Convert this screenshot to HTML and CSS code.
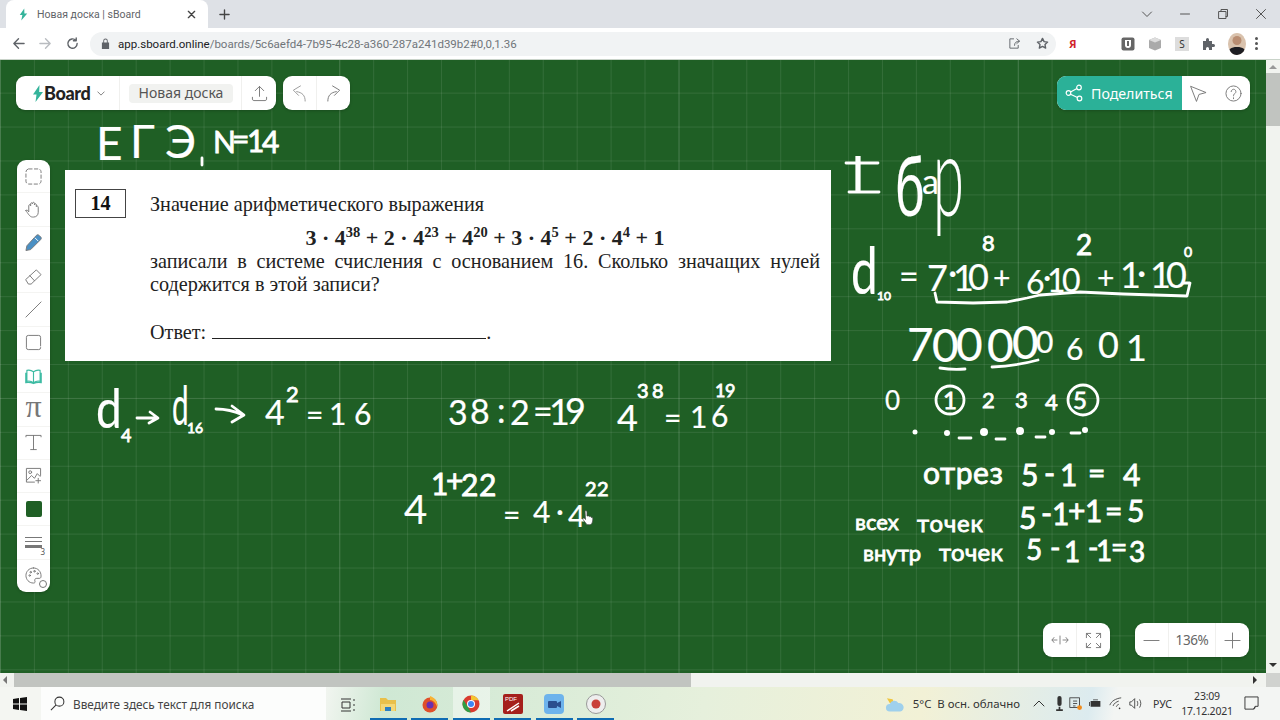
FILE: index.html
```html
<!DOCTYPE html>
<html lang="ru">
<head>
<meta charset="utf-8">
<title>Новая доска | sBoard</title>
<link rel="stylesheet" href="styles.css">
</head>
<body>
<header class="tabbar">
  <div class="tab">
    <svg class="favicon" viewBox="0 0 12 16"><path d="M7 0 1 8.500h3.500L3 16l8-9.500H7.200z"/></svg>
    <span class="tab-title">Новая доска | sBoard</span>
    <svg class="tab-x ic" viewBox="0 0 10 10"><path d="M1.500 1.500l7 7M8.500 1.500l-7 7"/></svg>
  </div>
  <svg class="tab-plus ic" viewBox="0 0 12 12"><path d="M6 1v10M1 6h10"/></svg>
  <div class="win-controls">
    <svg class="wc ic-thin" viewBox="0 0 12 12"><path d="M1.500 4 6 8.500 10.500 4"/></svg>
    <svg class="wc ic-thin" viewBox="0 0 12 12"><path d="M1.500 6h9"/></svg>
    <svg class="wc ic-thin" viewBox="0 0 12 12"><path d="M2 3.500h7v7H2zM4 3.500V1.500h6.500v7H9"/></svg>
    <svg class="wc ic-thin" viewBox="0 0 12 12"><path d="M1.500 1.500l9 9M10.500 1.500l-9 9"/></svg>
  </div>
</header>
<nav class="toolbar">
  <svg class="nav-ic ic" viewBox="0 0 14 14"><path d="M13 7H2M7 2 2 7l5 5"/></svg>
  <svg class="nav-ic ic dim" viewBox="0 0 14 14"><path d="M1 7h11M7 2l5 5-5 5"/></svg>
  <svg class="nav-ic ic" viewBox="0 0 14 14"><path d="M12 7a5 5 0 1 1-1.500-3.500M11 1v3H8"/></svg>
  <div class="omnibox">
    <svg class="lock" viewBox="0 0 10 12"><path d="M1 5h8v7H1zM2.500 5V3a2.500 2.500 0 0 1 5 0v2H6.500V3a1.500 1.500 0 0 0-3 0v2z"/></svg>
    <span class="url"><b>app.sboard.online</b>/boards/5c6aefd4-7b95-4c28-a360-287a241d39b2#0,0,1.36</span>
    <svg class="omni-ic share ic-thin" viewBox="0 0 14 14"><path d="M6 2H2v10h9V9M7 9c0-3 2-4.500 5-4.500M9.500 2 12.500 4.500 9.500 7"/></svg>
    <svg class="omni-ic ic" viewBox="0 0 14 14"><path d="M7 1.500l1.700 3.500 3.800.5-2.800 2.600.7 3.900L7 10.100 3.600 12l.7-3.900L1.500 5.500 5.300 5z"/></svg>
  </div>
  <div class="ext-row">
    <span class="ya">Я</span>
    <svg class="ext ext-far" viewBox="0 0 14 14"><rect class="e-dark" x="0.500" y="0.500" width="13" height="13" rx="2"/><path class="e-white" d="M4 3h6v5a3 3 0 0 1-6 0z"/><path class="e-dark" d="M6 4h2v5H6z"/></svg>
    <svg class="ext" viewBox="0 0 14 14"><path class="e-mid" d="M7 .5 13 3v8l-6 2.500L1 11V3z"/><path class="e-light" d="M7 .5 13 3 7 5.500 1 3z"/></svg>
    <span class="ext-s">S</span>
    <svg class="ext" viewBox="0 0 14 14"><path class="e-puzzle" d="M1 4h3V2.500a1.500 1.500 0 0 1 3 0V4h3v3h1.500a1.500 1.500 0 0 1 0 3H10v3H7v-1.500a1.500 1.500 0 0 0-3 0V13H1z"/></svg>
    <svg class="avatar" viewBox="0 0 18 22"><rect class="av-bg" width="18" height="22"/><circle class="av-face" cx="9" cy="7.500" r="4.500"/><path class="av-body" d="M0 22c0-6 3-8 9-8s9 2 9 8z"/></svg>
    <span class="dots"><i></i><i></i><i></i></span>
  </div>
</nav>

<main class="viewport">
  <div class="board-row">
    <section class="board">
      <svg class="ink" viewBox="0 60 1266 613">
        <text class="t f46" x="96 130 165" y="160 158 158">ЕГЭ</text>
        <path class="s" d="M202 158v7"/>
        <text class="t f30 b" x="213 232 247 262" y="153 150 152 153">N=14</text>

        <text class="t f50" x="851" y="192">I</text>
        <path class="s" d="M846 163h32M849 192h30"/>
        <text class="t f84" transform="translate(895 216) scale(.6 1)">б</text>
        <text class="t f34" x="922" y="194">а</text>
        <text class="t f112" transform="translate(933 216) scale(.5 1)">р</text>

        <text class="t f66" transform="translate(851 294) scale(.72 1)">d</text>
        <text class="t f12 b" x="877" y="300">10</text>
        <text class="t f34" x="899" y="289">=</text>
        <text class="t f36" x="927 948 953 968" y="291 285 291 290">7·10</text>
        <text class="t f22 b" x="982" y="251">8</text>
        <text class="t f30" x="993" y="289">+</text>
        <text class="t f32" x="1026 1043 1047 1062" y="294 288 292 292">6·10</text>
        <text class="t f28 b" x="1076" y="255">2</text>
        <text class="t f30" x="1097" y="289">+</text>
        <text class="t f36" x="1120 1137 1150 1166" y="288 285 288 288">1·10</text>
        <text class="t f14 b" x="1184" y="257">0</text>
        <path class="s" d="M935 293l2 9 36 1 34-1 20-4 13-3 40-3 43 2 64 2 3-13h-7"/>

        <text class="t f46" x="907 932 956 987 1012" y="361 362 361 362 359">70000</text>
        <text class="t f30" x="1036 1066" y="353 360">06</text>
        <text class="t f36" x="1098 1126" y="358 361">01</text>
        <path class="s" d="M940 368q12 2 25 1M992 367q24-1 46-7"/>

        <text class="t f26" x="885" y="410">0</text>
        <circle class="s" cx="950" cy="400" r="14"/>
        <text class="t f24 b" x="943" y="409">1</text>
        <text class="t f22 b" x="982 1015 1045" y="408 408 410">234</text>
        <circle class="s" cx="1083" cy="400" r="15"/>
        <text class="t f24 b" x="1073" y="409">5</text>
        <circle class="dot" cx="915" cy="432" r="2.500"/>
        <circle class="dot" cx="947" cy="433" r="3"/>
        <circle class="dot" cx="984" cy="432" r="4"/>
        <circle class="dot" cx="1020" cy="431" r="4"/>
        <circle class="dot" cx="1052" cy="432" r="3"/>
        <circle class="dot" cx="1085" cy="430" r="3"/>
        <path class="s" d="M959 438h12M996 439h9M1036 437h9M1071 433h9"/>

        <text class="t f30 b" x="923" y="484" textLength="80" lengthAdjust="spacing">отрез</text>
        <text class="t f30 b" x="1021 1044 1060 1088 1123" y="486 484 486 484 486">5-1=4</text>

        <text class="t f22 b" x="855" y="530">всех</text>
        <text class="t f24 b" x="917" y="532" textLength="66" lengthAdjust="spacing">точек</text>
        <text class="t f30 b" x="1019 1041 1052 1068 1085 1105 1127" y="529 524 525 522 522 522 522">5-1+1=5</text>

        <text class="t f22 b" x="863" y="561">внутр</text>
        <text class="t f24 b" x="939" y="561" textLength="64" lengthAdjust="spacing">точек</text>
        <text class="t f28 b" x="1026 1050 1064 1088 1096 1111 1129" y="560 558 562 558 561 557 562">5-1-1=3</text>

        <text class="t f54" transform="translate(96 428) scale(.85 1)">d</text>
        <text class="t f18 b" x="121" y="442">4</text>
        <path class="s" d="M137 418h20M150 412l8 6-9 5"/>
        <text class="t f54" transform="translate(172 425) scale(.55 1)">d</text>
        <text class="t f14 b" x="187" y="433">16</text>
        <path class="s" d="M216 409q14 0 27 6M232 406l12 9-12 7"/>
        <text class="t f34" x="265" y="425">4</text>
        <text class="t f22 b" x="286" y="402">2</text>
        <text class="t f30" x="306 329 354" y="426 425 425">=16</text>

        <text class="t f34" x="448 470 497 510 533" y="425 424 423 425 424">38:2=</text>
        <text class="t f36" x="549 565" y="425 424">19</text>
        <text class="t f36" x="617" y="431">4</text>
        <text class="t f20 b" x="637 652" y="398 398">38</text>
        <text class="t f30" x="664 690 711" y="429 428 427">=16</text>
        <text class="t f18 b" x="715 725" y="397 397">19</text>

        <text class="t f40" x="404" y="524">4</text>
        <text class="t f30 b" x="431 446 461 479" y="495 492 496 496">1+22</text>
        <text class="t f30" x="503 533 556 568" y="526 523 522 527">=4·4</text>
        <text class="t f20 b" x="585 597" y="496 496">22</text>
      </svg>

      <svg class="hand-cursor" viewBox="0 0 12 16"><path d="M3 1.500c1-.8 2 0 2 1v4l1 0c1-.3 1.500 0 1.700.7 1-.4 1.500 0 1.700.8 1-.2 1.400.4 1.400 1.200 0 3-1 6-3 6H5L1 10c-.6-1 .4-2 1.500-1.200L3.500 10z"/></svg>

      <article class="task">
        <div class="task-num">14</div>
        <div class="task-body">
          <p class="task-line">Значение арифметического выражения</p>
          <p class="formula">3 · 4<sup>38</sup> + 2 · 4<sup>23</sup> + 4<sup>20</sup> + 3 · 4<sup>5</sup> + 2 · 4<sup>4</sup> + 1</p>
          <p class="task-just">записали в системе счисления с основанием 16. Сколько значащих нулей содержится в этой записи?</p>
          <p class="task-answer">Ответ: <span class="blank"></span>.</p>
        </div>
      </article>

      <div class="panel top-left">
        <div class="logo-cell">
          <svg class="logo-bolt" viewBox="0 0 10 17"><path d="M6.500 0 0 9.500h3.500L2.500 17 10 7H6.200z"/></svg>
          <span class="logo-text">Board</span>
          <svg class="chev ic-thin" viewBox="0 0 10 6"><path d="M1 1l4 4 4-4"/></svg>
        </div>
        <div class="name-cell"><span class="board-name">Новая доска</span></div>
        <div class="icon-cell wide">
          <svg class="ic-lg ic-thin" viewBox="0 0 18 18"><path d="M9 12V1.500M4.500 6 9 1.500 13.500 6M1.500 13v2c0 .8.700 1.500 1.500 1.500h12c.8 0 1.500-.7 1.500-1.500v-2"/></svg>
        </div>
      </div>
      <div class="panel undo">
        <div class="icon-cell"><svg class="ic-lg ic-thin dim2" viewBox="0 0 18 18"><path d="M15 17c0-6-3-9-9-10M10 1 2.500 5.500 8 11"/></svg></div>
        <div class="icon-cell"><svg class="ic-lg ic-thin" viewBox="0 0 18 18"><path d="M3 17c0-6 3-9 9-10M8 1l7.500 4.500L10 11"/></svg></div>
      </div>
      <div class="panel top-right">
        <button class="share-btn">
          <svg class="share-ic" viewBox="0 0 18 18"><circle cx="3.500" cy="9" r="2.300"/><circle cx="14" cy="3.500" r="2.300"/><circle cx="14.500" cy="14.500" r="2.300"/><path d="M5.500 8 12 4.500M5.500 10.200l7 3.300"/></svg>
          Поделиться
        </button>
        <div class="share-tools">
          <svg class="ic-lg ic-thin" viewBox="0 0 18 18"><path d="M1 1.500 17 8 9.500 10 7 17z"/></svg>
          <svg class="ic-lg ic-thin" viewBox="0 0 18 18"><circle cx="9" cy="9" r="8"/><path d="M6.500 7a2.500 2.500 0 1 1 4 2c-1 .7-1.500 1.200-1.500 2.500M9 13.500v1"/></svg>
        </div>
      </div>

      <aside class="panel tools">
        <div class="tool"><svg class="ic-lg ic-thin dash" viewBox="0 0 18 18"><rect x="1" y="1" width="16" height="16" rx="3"/></svg></div>
        <div class="tool"><svg class="ic-lg ic-thin" viewBox="0 0 18 18"><path d="M1 10c1-1 2 0 3 1.500V5c0-1.500 2-1.500 2 0V3c0-1.500 2-1.500 2 0v-.5c0-1.500 2-1.500 2 0V4c0-1.500 2-1.500 2 0v2c0-1 2-1 2 .5V12c0 3-2 5-5 5H8c-3 0-5-4-7-7z"/></svg></div>
        <div class="tool"><svg class="ic-lg pen" viewBox="0 0 18 18"><path d="M12 1.500c1-1 2-.8 3 0l1.500 1.500c1 1 1 2 0 3L6 16.500l-5 1 1-5z"/><path class="pen-cut" d="M10.500 4l3.500 3.500"/></svg></div>
        <div class="tool"><svg class="ic-lg ic-thin" viewBox="0 0 18 18"><path d="M1 12 12 2l5 5L6.500 17H4zM5 8l5 5.500"/></svg></div>
        <div class="tool"><svg class="ic-lg ic-thin" viewBox="0 0 18 18"><path d="M1 17 17 1"/></svg></div>
        <div class="tool"><svg class="ic-lg ic-thin" viewBox="0 0 18 18"><path d="M16.500 14v.5a2 2 0 0 1-2 2h-11a2 2 0 0 1-2-2v-11a2 2 0 0 1 2-2h11a2 2 0 0 1 2 2v9"/></svg></div>
        <div class="tool"><svg class="ic-lg book" viewBox="0 0 18 18"><path d="M9 4C7 2.500 4 2 2 2.500V14c2-.5 5 0 7 1.500 2-1.500 5-2 7-1.500V2.500C14 2 11 2.500 9 4zM9 4v11.500M.8 5v10.500c3-.5 6 0 8.200 1 2.200-1 5.200-1.500 8.200-1V5"/></svg></div>
        <div class="tool"><span class="pi">π</span></div>
        <div class="tool"><svg class="ic-lg ic-thin" viewBox="0 0 18 18"><path d="M1 3V1.500h16V3M9 1.500v15M6 16.500h6"/></svg></div>
        <div class="tool"><svg class="ic-lg ic-thin" viewBox="0 0 18 18"><path d="M10 16H1.500V1.500h15V9"/><circle cx="5.500" cy="5.500" r="1.500"/><path d="M2 14l5-5 3 3 3-5 3 3M14 12v5M11.500 14.500h5"/></svg></div>
        <div class="tool"><span class="swatch"></span></div>
        <div class="tool"><span class="lines"><i></i><i></i><i></i></span><span class="lines-n">3</span></div>
        <div class="tool"><svg class="ic-lg ic-thin" viewBox="0 0 18 18"><path d="M9 1C4 1 1 5 1 9s3 8 8 8c1.500 0 2-1 1.500-2-.6-1.500 0-3 2-3h3c1 0 1.500-1 1.500-2.500C17 5 14 1 9 1z"/><circle cx="5" cy="9" r=".8"/><circle cx="6" cy="5.500" r=".8"/><circle cx="10" cy="4.500" r=".8"/><circle cx="13.500" cy="7" r=".8"/></svg><span class="palette-dot"></span></div>
      </aside>

      <div class="panel view-ctl">
        <div class="icon-cell"><svg class="ic-md ic-thin" viewBox="0 0 18 10"><path d="M6 5H1M3 2.500 1 5l2 2.500M12 5h5M15 2.500 17 5l-2 2.500M9 1v8"/></svg></div>
        <div class="icon-cell"><svg class="ic-lg ic-thin" viewBox="0 0 18 18"><path d="M6 6 1.500 1.500M1.500 6V1.500H6M12 6l4.500-4.500M12 1.500h4.500V6M6 12l-4.500 4.500M1.500 12v4.500H6M12 12l4.500 4.500M16.500 12v4.500H12"/></svg></div>
      </div>
      <div class="panel zoom-ctl">
        <div class="icon-cell"><svg class="ic-lg ic-thin" viewBox="0 0 18 18"><path d="M1 9h16"/></svg></div>
        <div class="zoom-val">136%</div>
        <div class="icon-cell"><svg class="ic-lg ic-thin" viewBox="0 0 18 18"><path d="M1 9h16M9 1v16"/></svg></div>
      </div>
    </section>
    <div class="vscroll">
      <span class="arrow-up"></span>
      <span class="vthumb"></span>
      <span class="arrow-down"></span>
    </div>
  </div>
  <div class="hscroll">
    <span class="arrow-left"></span>
    <span class="hthumb"></span>
    <span class="arrow-right"></span>
    <span class="corner"></span>
  </div>
</main>

<footer class="taskbar">
  <svg class="start" viewBox="0 0 14 14"><path d="M0 2 6 1v5.500H0zM7 .9 14 0v6.500H7zM0 7.500h6V13l-6-1zM7 7.500h7V14l-7-1z"/></svg>
  <div class="search">
    <svg class="search-ic" viewBox="0 0 16 16"><circle cx="10" cy="6" r="4.800"/><path d="M6.500 9.500 1 15"/></svg>
    <span>Введите здесь текст для поиска</span>
  </div>
  <div class="task-icons">
    <div class="ti plain"><svg class="ti-svg" viewBox="0 0 18 18"><path class="tv" d="M3 3h10M3 15h10M4 6h8v6H4zM16 3v2M16 8v2M16 13v2"/></svg></div>
    <div class="ti"><svg class="ti-svg" viewBox="0 0 18 18"><path class="f1" d="M1 3h6l2 2h8v11H1z"/><path class="f2" d="M2 9h14v7H2z"/><path class="f3" d="M6 12h6v4H6z"/></svg></div>
    <div class="ti"><svg class="ti-svg" viewBox="0 0 18 18"><circle class="ff1" cx="9" cy="10" r="7.500"/><path class="ff2" d="M9 1c5 2 8 5 7 11C15 8 12 5 9 5z"/><circle class="ff3" cx="9" cy="10" r="3.500"/></svg></div>
    <div class="ti active"><svg class="ti-svg" viewBox="0 0 18 18"><circle class="cr" cx="9" cy="9" r="8.500"/><path class="cy" d="M9 .5a8.500 8.500 0 0 1 7.600 4.700H9z"/><path class="cg" d="M1.500 5 6 12l3 5.500A8.500 8.500 0 0 1 1.500 5z"/><circle class="cw" cx="9" cy="9" r="4"/><circle class="cb" cx="9" cy="9" r="3"/></svg></div>
    <div class="ti"><svg class="ti-svg big" viewBox="0 0 20 20"><rect class="pdf" width="20" height="20" rx="2"/><path class="pdfw" d="M4 17 16 9M8 17l8-5"/><text class="pdft" x="2" y="7">PDF</text></svg></div>
    <div class="ti"><svg class="ti-svg big" viewBox="0 0 20 20"><rect class="zm" width="20" height="20" rx="4"/><rect class="zm2" x="4" y="7" width="9" height="7" rx="1"/><path class="zm3" d="M13 9l4-2v7l-4-2z"/></svg></div>
    <div class="ti"><svg class="ti-svg big" viewBox="0 0 20 20"><circle class="rec1" cx="10" cy="10" r="9.500"/><circle class="rec2" cx="10" cy="10" r="4.500"/></svg></div>
  </div>
  <div class="tray">
    <svg class="cloud" viewBox="0 0 20 20"><path class="sun" d="M2 4l6 1 2 5-5-1z"/><path class="cl" d="M5 18a4 4 0 0 1 0-8 5 5 0 0 1 9-1 4.500 4.500 0 0 1 2 9z"/></svg>
    <span class="weather">5°C&nbsp; В осн. облачно</span>
    <svg class="tr ic-thin up" viewBox="0 0 12 12"><path d="M1 8.500 6 3.500l5 5"/></svg>
    <svg class="tr mic" viewBox="0 0 12 18"><rect class="d" x="3.500" y="0" width="5" height="12" rx="2.500"/><path class="d" d="M5 13h2v3h3v2H2v-2h3z"/></svg>
    <svg class="tr" viewBox="0 0 16 16"><rect class="tr-o" x="1" y="1" width="12" height="12"/><path class="tr-o" d="M5 5h5M5 8h5M5 11h3"/><circle class="tr-a" cx="13" cy="13" r="3"/></svg>
    <svg class="tr" viewBox="0 0 16 12"><path class="d" d="M2 3h12v7H2zM0 4h1v5H0zM5 1h6v1H5z"/></svg>
    <svg class="tr" viewBox="0 0 16 16"><path class="tr-o" d="M1 10C3 5 8 2 15 1M5 11c1-3 4-5 7-6M9 12c.5-1.500 1-2 3-3"/><circle class="d" cx="13" cy="14" r="1"/></svg>
    <svg class="tr" viewBox="0 0 16 16"><path class="tr-o" d="M1 6h2l4-4v12l-4-4H1zM10 5c1 2 1 4 0 6M13 3c2 3 2 7 0 10"/></svg>
    <span class="lang">РУС</span>
    <div class="clock"><span>23:09</span><span>17.12.2021</span></div>
    <svg class="notif" viewBox="0 0 16 16"><path class="tr-o" d="M1 1h14v10h-3l-2 3H1zM10 14c1 0 1.500 0 2-3"/></svg>
  </div>
</footer>
</body>
</html>
```
FILE: styles.css
```css
* { box-sizing: border-box; }
html, body { margin: 0; padding: 0; }
body {
  width: 1280px; height: 720px; overflow: hidden;
  display: flex; flex-direction: column;
  font-family: "Noto Sans", "Liberation Sans", sans-serif;
  background: #fff; color: #333;
}
.ic, .ic-thin { fill: none; stroke: #5f6368; stroke-width: 1.500; stroke-linecap: round; stroke-linejoin: round; }
.ic-thin { stroke-width: 1; }
.dim { stroke: #b9bcc0; }
.dim2 { opacity: .75; }

/* tab strip */
.tabbar { height: 28px; background: #dee1e6; display: flex; align-items: flex-end; padding-left: 6px; flex: none; }
.tab { width: 202px; height: 28px; background: #fff; border-radius: 8px 8px 0 0; display: flex; align-items: center; padding-left: 13px; }
.favicon { width: 9px; height: 13px; fill: #35b49b; }
.tab-title { font: 10.500px "Roboto", sans-serif; color: #5f6368; margin-left: 9px; width: 150px; white-space: nowrap; }
.tab-x { width: 9px; height: 9px; stroke: #444; }
.tab-plus { width: 11px; height: 11px; margin: 0 0 8px 11px; stroke: #444; }
.win-controls { margin-left: auto; height: 28px; display: flex; align-items: center; gap: 26px; padding-right: 13px; }
.wc { width: 12px; height: 12px; stroke: #555; }

/* address bar */
.toolbar { height: 32px; background: #fff; display: flex; align-items: center; flex: none; padding-left: 12px; border-bottom: 1px solid #c9d3c9; }
.nav-ic { width: 13px; height: 13px; margin-right: 14px; }
.omnibox { width: 966px; height: 24px; border-radius: 12px; background: #f1f3f4; margin-left: -3px; display: flex; align-items: center; padding: 0 7px 0 11px; }
.lock { width: 9px; height: 11px; fill: #5f6368; }
.url { font: 11.500px "Roboto", sans-serif; color: #70757a; margin-left: 8px; white-space: nowrap; }
.url b { font-weight: 400; color: #202124; }
.omni-ic { width: 13px; height: 13px; margin-left: 15px; }
.share { margin-left: auto; }
.ext-row { display: flex; align-items: center; flex: 1; padding-left: 13px; }
.ya { color: #d0242c; font-size: 11px; font-weight: 700; width: 12px; }
.ext { width: 14px; height: 14px; margin-right: 13px; }
.ext-far { margin-left: 40px; }
.e-dark { fill: #666; } .e-white { fill: #fff; }
.e-mid { fill: #aaa; } .e-light { fill: #ddd; }
.e-puzzle { fill: #5f6368; }
.ext-s { width: 14px; height: 14px; background: #ddd; color: #333; font-size: 10px; text-align: center; line-height: 14px; margin-right: 13px; }
.avatar { width: 18px; height: 22px; border-radius: 50%; margin-left: -1px; margin-right: 9px; }
.av-bg { fill: #d9c2ad; } .av-face { fill: #b98d72; } .av-body { fill: #1d1d22; }
.dots { display: flex; flex-direction: column; gap: 2px; }
.dots i { width: 3px; height: 3px; border-radius: 50%; background: #555; }

/* board */
.viewport { flex: 1; display: flex; flex-direction: column; min-height: 0; }
.board-row { flex: 1; display: flex; min-height: 0; }
.board {
  flex: 1; position: relative; overflow: hidden;
  background-color: #1f5f25;
  background-image:
    linear-gradient(to right, rgba(255,255,255,.1) 1px, transparent 1px),
    linear-gradient(to bottom, rgba(255,255,255,.06) 1px, transparent 1px),
    linear-gradient(to right, rgba(255,255,255,.09) 1px, transparent 1px),
    linear-gradient(to bottom, rgba(255,255,255,.09) 1px, transparent 1px);
  background-size: 339.300px 339.300px, 339.300px 339.300px, 33.930px 33.930px, 33.930px 33.930px;
  background-position: 0 0, 0 -1.300px, 0 0, 0 -1.300px;
}
.ink { position: absolute; left: 0; top: 0; width: 1266px; height: 613px; }
.t { fill: #fff; font-family: "Lato", "Noto Sans", sans-serif; font-weight: 400; stroke: #fff; stroke-width: .2px; }
.t.b { stroke-width: .8px; }
.f12 { font-size: 12px; } .f14 { font-size: 14px; } .f18 { font-size: 18px; } .f20 { font-size: 20px; }
.f22 { font-size: 22px; } .f24 { font-size: 24px; } .f26 { font-size: 26px; } .f28 { font-size: 28px; }
.f30 { font-size: 30px; } .f32 { font-size: 32px; } .f34 { font-size: 34px; } .f36 { font-size: 36px; }
.f38 { font-size: 38px; } .f40 { font-size: 40px; } .f44 { font-size: 44px; } .f46 { font-size: 46px; }
.f48 { font-size: 48px; } .f50 { font-size: 50px; } .f54 { font-size: 54px; } .f66 { font-size: 66px; }
.f84 { font-size: 84px; } .f112 { font-size: 112px; font-weight: 300; }
.s { fill: none; stroke: #fff; stroke-width: 2.800; stroke-linecap: round; stroke-linejoin: round; }
.dot { fill: #fff; }
.hand-cursor { position: absolute; left: 582px; top: 449px; width: 12px; height: 17px; fill: #fff; stroke: #444; stroke-width: .7; }

/* pasted task */
.task {
  position: absolute; left: 65px; top: 110px; width: 766px; height: 191px;
  background: #fff; display: flex; gap: 24px; padding: 19px 11px 0 10px;
  font-family: "Liberation Serif", serif; font-size: 20.200px; color: #222;
}
.task-num { width: 51px; height: 29px; border: 1.500px solid #444; font-weight: 700; text-align: center; line-height: 27px; flex: none; color: #111; }
.task-body { flex: 1; }
.task p { margin: 0; }
.task-line { line-height: 23px; margin-top: 4px !important; }
.formula { text-align: center; font-weight: 700; font-size: 22px; line-height: 23px; height: 24px; margin-top: 10px !important; white-space: nowrap; }
.formula sup { font-size: 14.500px; line-height: 0; }
.task-just { text-align: justify; line-height: 23px; }
.task-answer { line-height: 23px; margin-top: 25px !important; }
.blank { display: inline-block; width: 274px; border-bottom: 1.500px solid #222; height: 14px; margin-left: 1px; vertical-align: baseline; }

/* floating panels */
.panel { position: absolute; background: #fff; border-radius: 9px; display: flex; box-shadow: 0 1px 3px rgba(0,0,0,.2); }
.top-left { left: 16px; top: 16px; width: 260px; height: 34px; align-items: stretch; }
.logo-cell { width: 104px; display: flex; align-items: center; padding-left: 17px; border-right: 1px solid #f0f0ee; }
.logo-bolt { width: 10px; height: 17px; fill: #35b49b; flex: none; }
.logo-text { font: 900 18px "Lato", sans-serif; color: #222; margin-left: 1px; letter-spacing: -.4px; }
.chev { width: 8px; height: 5px; margin-left: 7px; stroke: #666; }
.name-cell { width: 122px; display: flex; align-items: center; padding-left: 9px; border-right: 1px solid #f0f0ee; }
.board-name { background: #f1f2f0; border-radius: 4px; font-size: 14px; color: #555; width: 104px; height: 19px; line-height: 17px; text-align: center; white-space: nowrap; }
.icon-cell { flex: 1; display: flex; align-items: center; justify-content: center; }
.icon-cell + .icon-cell { border-left: 1px solid #f0f0ee; }
.ic-lg { width: 17px; height: 17px; stroke: #777; }
.ic-md { width: 18px; height: 10px; stroke: #888; }
.undo { left: 283px; top: 16px; width: 67px; height: 34px; }
.top-right { left: 1057px; top: 16px; width: 193px; height: 34px; overflow: hidden; }
.share-btn { width: 125px; border: 0; padding: 0 0 0 8px; background: #2bb198; color: #fff; font: 14.200px "Noto Sans", sans-serif; display: flex; align-items: center; gap: 8px; white-space: nowrap; }
.share-ic { width: 18px; height: 18px; fill: none; stroke: #fff; stroke-width: 1.200; }
.share-tools { flex: 1; display: flex; align-items: center; justify-content: space-between; padding: 0 8px; }
.tools { left: 17px; top: 100px; width: 33px; height: 432px; flex-direction: column; }
.tool { flex: 1; display: flex; align-items: center; justify-content: center; position: relative; border-bottom: 1px solid #f4f4f2; }
.tool:last-child { border-bottom: 0; }
.dash { stroke-dasharray: 3.500 2.500; }
.pen { width: 17px; height: 17px; fill: #4a90c4; }
.pen-cut { stroke: #fff; stroke-width: 1; fill: none; }
.book { width: 17px; height: 17px; fill: none; stroke: #3dbba3; stroke-width: 1.200; }
.pi { font: 32px "Liberation Serif", serif; color: #777; line-height: 1; margin-top: -6px; }
.swatch { width: 16px; height: 16px; border-radius: 2px; background: #1f5f25; }
.lines { display: flex; flex-direction: column; gap: 3px; width: 17px; }
.lines i { display: block; height: 1px; background: #777; }
.lines i:nth-child(2) { height: 1.500px; }
.lines i:nth-child(3) { height: 3px; }
.lines-n { position: absolute; right: 5px; bottom: 3px; font-size: 8px; color: #555; line-height: 1; }
.palette-dot { position: absolute; right: 3px; bottom: 4px; width: 8px; height: 8px; border-radius: 50%; background: #fff; border: 1px solid #777; }
.view-ctl { left: 1043px; top: 563px; width: 67px; height: 34px; }
.zoom-ctl { left: 1135px; top: 563px; width: 114px; height: 34px; }
.zoom-ctl .icon-cell { flex: none; width: 33px; }
.zoom-val { width: 48px; text-align: center; line-height: 34px; font-size: 13.500px; color: #666; border-left: 1px solid #f0f0ee; border-right: 1px solid #f0f0ee; letter-spacing: -.4px; }

/* scrollbars */
.vscroll { width: 14px; background: #f1f3ef; position: relative; flex: none; display: flex; flex-direction: column; align-items: center; }
.vthumb { width: 14px; height: 53px; background: #c1c4c0; margin-top: 13px; }
.arrow-up, .arrow-down { width: 0; height: 0; border-left: 4px solid transparent; border-right: 4px solid transparent; }
.arrow-up { border-bottom: 4px solid #999; margin-top: 5px; margin-bottom: -9px; }
.arrow-down { border-top: 4px solid #333; margin-top: auto; margin-bottom: 6px; }
.hscroll { height: 14px; background: #f1f3ef; display: flex; align-items: center; flex: none; }
.hthumb { width: 677px; height: 14px; background: #c1c4c0; margin-left: 7px; }
.arrow-left, .arrow-right { width: 0; height: 0; border-top: 4px solid transparent; border-bottom: 4px solid transparent; }
.arrow-left { border-right: 4px solid #777; margin-left: 3px; }
.arrow-right { border-left: 4px solid #333; margin-left: auto; margin-right: 9px; }
.corner { width: 14px; height: 14px; background: #d0d2cf; }

/* taskbar */
.taskbar {
  height: 33px; flex: none; display: flex; align-items: center;
  background: linear-gradient(100deg, #f4f6f2 0, #f4f6f2 25%, #cfe8d4 30%, #e6f0dc 55%, #f2f1d6 72%, #dcebef 85%, #f3f5f3 87%, #f3f5f3 100%);
}
.start { width: 14px; height: 14px; margin-left: 13px; fill: #111; flex: none; }
.search { width: 285px; height: 33px; margin-left: 14px; background: #fcfdfc; display: flex; align-items: center; padding-left: 9px; font-size: 11.800px; color: #444; gap: 8px; white-space: nowrap; flex: none; }
.search-ic { width: 15px; height: 15px; fill: none; stroke: #333; stroke-width: 1.100; flex: none; }
.task-icons { display: flex; height: 33px; margin-left: 2px; gap: 4.500px; }
.ti { width: 37px; height: 33px; display: flex; align-items: center; justify-content: center; border-bottom: 2px solid #0f6cb3; padding-top: 2px; flex: none; }
.ti.plain { border-bottom: 0; width: 37px; }
.ti.active { background: rgba(255,255,255,.45); }
.ti-svg { width: 18px; height: 18px; }
.ti-svg.big { width: 20px; height: 20px; }
.tv { fill: none; stroke: #333; stroke-width: 1; }
.f1 { fill: #e9c04a; } .f2 { fill: #f3d777; } .f3 { fill: #2b7fc3; }
.ff1 { fill: #e0502a; } .ff2 { fill: #f9b233; } .ff3 { fill: #6a2fb0; }
.cr { fill: #d93b30; } .cy { fill: #f4c430; } .cg { fill: #2f9e44; } .cw { fill: #fff; } .cb { fill: #3f85f4; }
.pdf { fill: #a5201c; } .pdfw { stroke: #fff; stroke-width: 1.500; fill: none; } .pdft { font: 6px "Liberation Sans", sans-serif; fill: #fff; }
.zm { fill: #6db3ec; } .zm2 { fill: #2a4f8f; } .zm3 { fill: #2a4f8f; }
.rec1 { fill: #eee; stroke: #999; } .rec2 { fill: #c9403a; }
.tray { margin-left: auto; display: flex; align-items: center; height: 33px; font-size: 11.500px; color: #333; }
.cloud { width: 19px; height: 20px; margin-right: 9px; }
.sun { fill: #f0c640; } .cl { fill: #9fd0ec; }
.weather { white-space: nowrap; margin-right: 13px; font-size: 11.400px; }
.tr { width: 13px; height: 15px; margin-right: 7px; }
.mic { margin-right: 3px; }
.up { stroke: #333; width: 12px; margin-right: 8px; }
.d { fill: #333; }
.tr-o { fill: none; stroke: #333; stroke-width: 1; }
.tr-a { fill: #f08c1e; }
.lang { font-size: 10.500px; margin: 0 10px 0 4px; }
.clock { display: flex; flex-direction: column; align-items: center; font-size: 10.500px; line-height: 15px; width: 50px; letter-spacing: -.2px; }
.notif { width: 15px; height: 15px; margin: 0 21px 0 12px; }
```
